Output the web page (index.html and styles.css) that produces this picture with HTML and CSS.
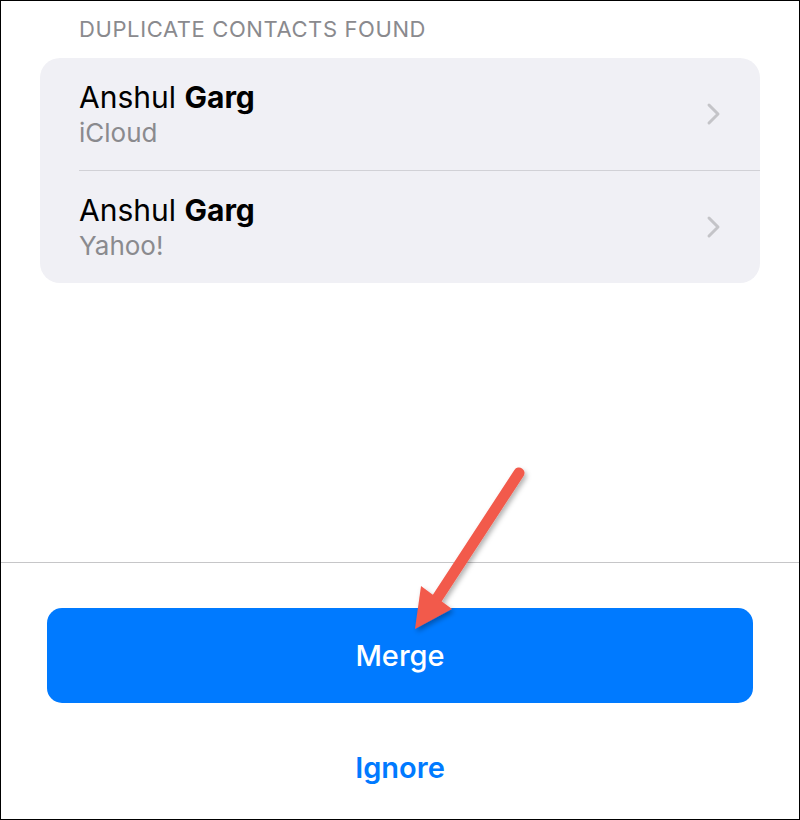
FILE: index.html
```html
<!DOCTYPE html>
<html>
<head>
<meta charset="utf-8">
<link rel="stylesheet" href="styles.css">
</head>
<body>
<div class="screen">
  <div class="top">
    <div class="section-title">DUPLICATE CONTACTS FOUND</div>
    <div class="card">
      <div class="row">
        <div class="texts">
          <div class="name">Anshul <b>Garg</b></div>
          <div class="source">iCloud</div>
        </div>
        <svg class="chev" width="16" height="24" viewBox="0 0 16 24"><path d="M3 3 L12 12 L3 21" fill="none" stroke="#c4c4c8" stroke-width="3" stroke-linecap="round" stroke-linejoin="round"/></svg>
      </div>
      <div class="row">
        <div class="texts">
          <div class="name">Anshul <b>Garg</b></div>
          <div class="source">Yahoo!</div>
        </div>
        <svg class="chev" width="16" height="24" viewBox="0 0 16 24"><path d="M3 3 L12 12 L3 21" fill="none" stroke="#c4c4c8" stroke-width="3" stroke-linecap="round" stroke-linejoin="round"/></svg>
      </div>
    </div>
  </div>
  <div class="bottom">
    <button class="merge">Merge</button>
    <button class="ignore">Ignore</button>
  </div>
  <svg class="arrow" width="800" height="820" viewBox="0 0 800 820">
    <defs>
      <filter id="sh" x="-20%" y="-20%" width="140%" height="140%">
        <feDropShadow dx="2" dy="3" stdDeviation="2.5" flood-color="#000" flood-opacity="0.3"/>
      </filter>
    </defs>
    <g filter="url(#sh)">
      <line x1="519" y1="473" x2="436" y2="600" stroke="#f25a4c" stroke-width="11" stroke-linecap="round"/>
      <polygon points="415,629 421,586 452,609" fill="#f25a4c"/>
    </g>
  </svg>
</div>
</body>
</html>
```
FILE: styles.css
```css
html, body {
  margin: 0;
  padding: 0;
  background: #fff;
}
.screen {
  position: relative;
  width: 800px;
  height: 820px;
  box-sizing: border-box;
  border: 1px solid #000;
  display: flex;
  flex-direction: column;
  font-family: Inter, "Liberation Sans", sans-serif;
  overflow: hidden;
}
.top {
  flex: 1;
  padding: 0 39px 0 39px;
  border-bottom: 1px solid #c6c6c8;
}
.section-title {
  color: #8a8a8e;
  font-size: 22px;
  letter-spacing: 0.6px;
  line-height: 24px;
  padding: 16px 0 0 39px;
  height: 41px;
}
.card {
  background: #f0f0f5;
  border-radius: 20px;
  overflow: hidden;
}
.row {
  height: 112px;
  display: flex;
  align-items: center;
  margin-left: 39px;
  padding-right: 38px;
  box-sizing: border-box;
}
.row + .row {
  border-top: 1.5px solid #d1d1d6;
  height: 113px;
}
.texts {
  flex: 1;
  padding-top: 2px;
}
.name {
  font-size: 30px;
  color: #000;
  line-height: 36px;
  letter-spacing: 0;
}
.name b {
  font-weight: 700;
}
.source {
  font-size: 26px;
  color: #8a8a8e;
  line-height: 36px;
}
.chev {
  display: block;
}
.bottom {
  height: 256px;
  display: flex;
  flex-direction: column;
  align-items: center;
  padding-top: 45px;
  box-sizing: border-box;
}
.merge {
  width: 706px;
  height: 95px;
  border: none;
  border-radius: 15px;
  background: #007aff;
  color: #fff;
  font-family: Inter, "Liberation Sans", sans-serif;
  font-size: 29px;
  font-weight: 500;
  padding: 0;
}
.ignore {
  margin-top: 47px;
  border: none;
  background: none;
  color: #007aff;
  font-family: Inter, "Liberation Sans", sans-serif;
  font-size: 29px;
  font-weight: 600;
  padding: 0;
}
.arrow {
  position: absolute;
  left: -1px;
  top: -1px;
  pointer-events: none;
}
```
